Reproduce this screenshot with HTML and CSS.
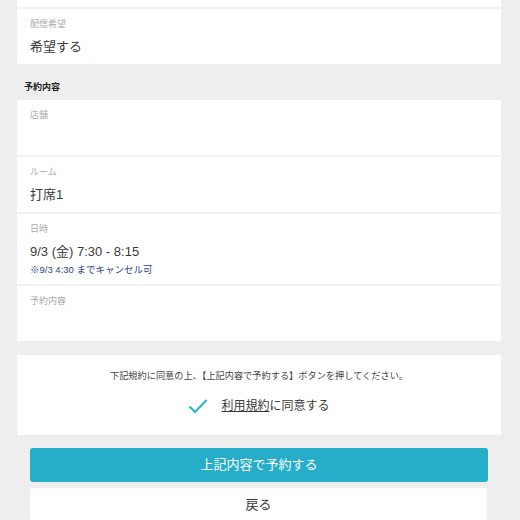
FILE: index.html
```html
<!DOCTYPE html>
<html lang="ja">
<head>
<meta charset="utf-8">
<link rel="stylesheet" href="styles.css">
</head>
<body>
<div class="page">
  <div class="group">
    <div class="item item-cut"></div>
    <div class="item">
      <div class="label">配信希望</div>
      <div class="value">希望する</div>
    </div>
  </div>

  <div class="section-title">予約内容</div>

  <div class="group">
    <div class="item">
      <div class="label">店舗</div>
      <div class="value"></div>
    </div>
    <div class="item">
      <div class="label">ルーム</div>
      <div class="value">打席1</div>
    </div>
    <div class="item">
      <div class="label">日時</div>
      <div class="value">9/3 (金) 7:30 - 8:15</div>
      <div class="note">※9/3 4:30 までキャンセル可</div>
    </div>
    <div class="item">
      <div class="label">予約内容</div>
      <div class="value"></div>
    </div>
  </div>

  <div class="consent">
    <p class="consent-text">下記規約に同意の上、【上記内容で予約する】ボタンを押してください。</p>
    <div class="agree">
      <svg class="check" width="20" height="16" viewBox="0 0 20 16"><path d="M1.5 8.5 L7 14 L18.5 2" fill="none" stroke="#2eb2d2" stroke-width="2"/></svg>
      <span class="agree-text"><a class="terms">利用規約</a>に同意する</span>
    </div>
  </div>

  <div class="actions">
    <button class="btn btn-primary">上記内容で予約する</button>
    <button class="btn btn-back">戻る</button>
  </div>
</div>
</body>
</html>
```

FILE: styles.css
```css
html, body {
  margin: 0;
  padding: 0;
  background: #eeeeee;
}
body {
  font-family: "Liberation Sans", "Noto Sans CJK JP", sans-serif;
  color: #333;
}
.page {
  padding: 0 19px 0 17px;
}
.group {
  display: flex;
  flex-direction: column;
  gap: 2px;
  background: #f2f2f2;
}
.item {
  background: #fff;
  padding: 7px 13px 7px;
}
.item-cut {
  height: 7px;
  padding: 0;
}
.label {
  font-size: 9px;
  line-height: 16px;
  color: #aaa;
}
.value {
  margin-top: 5px;
  font-size: 13px;
  line-height: 20px;
  min-height: 20px;
  color: #3a3a3a;
}
.note {
  font-size: 9.5px;
  line-height: 15px;
  color: #2c468a;
}
.section-title {
  font-size: 9px;
  font-weight: bold;
  line-height: 16px;
  padding: 15px 7px 5px;
  color: #222;
}
.consent {
  margin-top: 14px;
  background: #fff;
  height: 80px;
  display: flex;
  flex-direction: column;
  align-items: center;
}
.consent-text {
  margin: 14px 0 0;
  font-size: 9.2px;
  line-height: 14px;
  color: #444;
}
.agree {
  margin-top: 14px;
  display: flex;
  align-items: center;
  gap: 13px;
}
.check {
  display: block;
}
.agree-text {
  font-size: 12px;
  line-height: 18px;
  color: #3a3a3a;
}
.terms {
  text-decoration: underline;
  color: #3a3a3a;
}
.actions {
  padding: 13px 13px 0;
  display: flex;
  flex-direction: column;
  gap: 6px;
}
.btn {
  display: block;
  width: 100%;
  border: none;
  border-radius: 3px;
  font-family: "Liberation Sans", "Noto Sans CJK JP", sans-serif;
  height: 34px;
  font-size: 13px;
  line-height: 32px;
  padding: 0;
}
.btn-primary {
  background: #26adca;
  color: #fff;
}
.btn-back {
  background: #fff;
  color: #3a3a3a;
  width: calc(100% - 1px);
}
```
